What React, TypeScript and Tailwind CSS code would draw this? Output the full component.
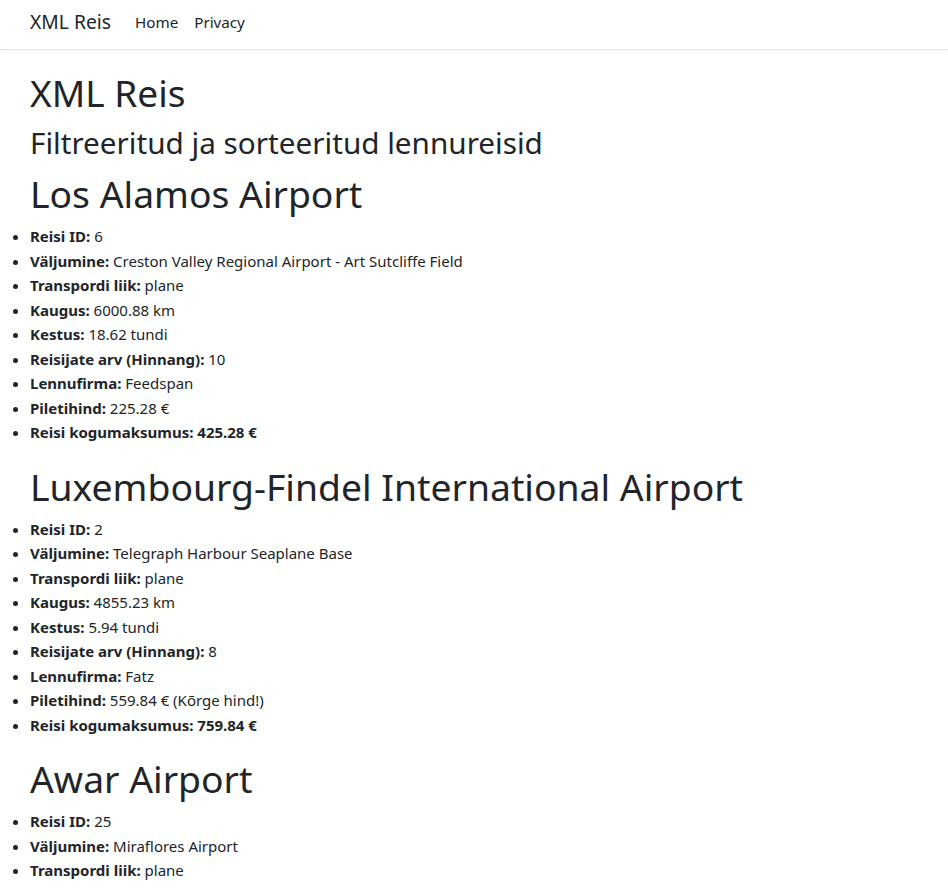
const trips = [
  {
    airport: 'Los Alamos Airport',
    id: '6',
    from: 'Creston Valley Regional Airport - Art Sutcliffe Field',
    type: 'plane',
    distance: '6000.88 km',
    duration: '18.62 tundi',
    passengers: '10',
    airline: 'Feedspan',
    price: '225.28 €',
    total: '425.28 €',
  },
  {
    airport: 'Luxembourg-Findel International Airport',
    id: '2',
    from: 'Telegraph Harbour Seaplane Base',
    type: 'plane',
    distance: '4855.23 km',
    duration: '5.94 tundi',
    passengers: '8',
    airline: 'Fatz',
    price: '559.84 € (Kõrge hind!)',
    total: '759.84 €',
  },
  {
    airport: 'Awar Airport',
    id: '25',
    from: 'Miraflores Airport',
    type: 'plane',
    distance: '3120.45 km',
    duration: '7.12 tundi',
    passengers: '12',
    airline: 'Skinix',
    price: '310.50 €',
    total: '510.50 €',
  },
];

function Row({ label, value }: { label: string; value: string }) {
  return (
    <li>
      <strong className="font-bold">{label}:</strong> {value}
    </li>
  );
}

function App() {
  return (
    <div
      className="min-h-screen bg-white text-[#212529] text-[15px]"
      style={{ fontFamily: '"Noto Sans", "Open Sans", sans-serif' }}
    >
      <header className="h-[50px] border-b border-[#e3e3e3] shadow-[0_1px_3px_rgba(0,0,0,0.04)] flex items-center pb-[5px] px-[30px]">
        <span className="text-[19.3px] mr-[24px]">XML Reis</span>
        <nav className="flex gap-[16px] text-[15.2px]">
          <a>Home</a>
          <a>Privacy</a>
        </nav>
      </header>

      <main className="pt-[20px]">
        <h1 className="pl-[30px] text-[37px] leading-[45px] mb-[10px]">XML Reis</h1>
        <h2 className="pl-[30px] text-[29.7px] leading-[36px] mb-[10px]">Filtreeritud ja sorteeritud lennureisid</h2>
        {trips.map((t) => (
          <section key={t.id}>
            <h1 className="pl-[30px] text-[37.3px] leading-[45px] mb-[8px]">{t.airport}</h1>
            <ul className="list-disc pl-[30px] mb-[19px] leading-[24.5px]">
              <Row label="Reisi ID" value={t.id} />
              <Row label="Väljumine" value={t.from} />
              <Row label="Transpordi liik" value={t.type} />
              <Row label="Kaugus" value={t.distance} />
              <Row label="Kestus" value={t.duration} />
              <Row label="Reisijate arv (Hinnang)" value={t.passengers} />
              <Row label="Lennufirma" value={t.airline} />
              <Row label="Piletihind" value={t.price} />
              <li>
                <strong className="font-bold">Reisi kogumaksumus: {t.total}</strong>
              </li>
            </ul>
          </section>
        ))}
      </main>
    </div>
  );
}

export default App;
